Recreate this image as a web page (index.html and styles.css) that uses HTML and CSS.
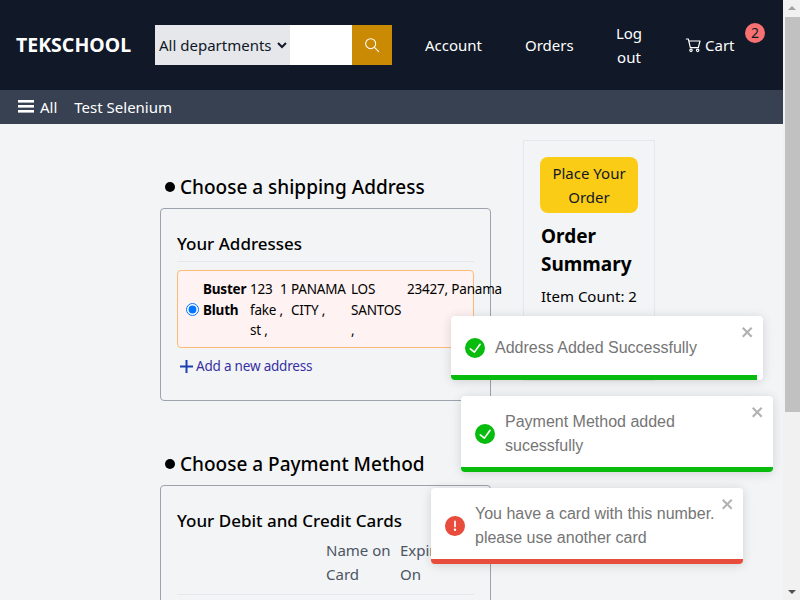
FILE: index.html
```html
<!DOCTYPE html>
<html lang="en">
<head>
  <meta charset="UTF-8" />
  <title>TEKSCHOOL - Checkout</title>
  <link rel="stylesheet" href="styles.css">
</head>
<body>
  <div class="page">
    <header class="top-bar">
      <div class="logo">TEKSCHOOL</div>
      <form class="search">
        <select class="search-select">
          <option>All departments</option>
        </select>
        <input class="search-input" type="text" />
        <button class="search-btn" type="button">
          <svg width="16" height="16" viewBox="0 0 24 24" fill="none" stroke="currentColor" stroke-width="1.6" stroke-linecap="round"><circle cx="10" cy="10" r="7.5"/><path d="M16 16l6 6"/></svg>
        </button>
      </form>
      <nav class="top-links">
        <a>Account</a>
        <a>Orders</a>
        <a class="center">Log out</a>
        <a class="cart">
          <svg width="16" height="16" viewBox="0 0 24 24" fill="none" stroke="currentColor" stroke-width="1.8" stroke-linecap="round" stroke-linejoin="round"><path d="M2 3h3l3 13h12l2.5-10H6"/><circle cx="9" cy="20" r="1.8"/><circle cx="19" cy="20" r="1.8"/></svg>
          Cart
          <span class="badge">2</span>
        </a>
      </nav>
    </header>
    <div class="sub-bar">
      <span class="all">
        <svg width="18" height="14" viewBox="0 0 18 14" fill="currentColor"><rect y="0" width="16" height="2.6"/><rect y="5" width="16" height="2.6"/><rect y="10" width="16" height="2.6"/></svg>
        All
      </span>
      <span>Test Selenium</span>
    </div>

    <main class="checkout">
      <div class="steps">
        <section class="step">
          <h2 class="step-title"><i class="dot"></i>Choose a shipping Address</h2>
          <div class="box">
            <h3 class="box-title">Your Addresses</h3>
            <div class="address">
              <input type="radio" checked />
              <b>Buster Bluth</b>
              <span>123 fake&nbsp;, st&nbsp;,</span>
              <span>1</span>
              <span>PANAMA CITY&nbsp;,</span>
              <span>LOS SANTOS ,</span>
              <span class="nowrap">23427, Panama</span>
            </div>
            <a class="add-link">
              <svg width="13" height="13" viewBox="0 0 13 13" fill="none" stroke="#1e40af" stroke-width="2"><path d="M6.5 0v13M0 6.5h13"/></svg>
              Add a new address
            </a>
          </div>
        </section>

        <section class="step">
          <h2 class="step-title"><i class="dot"></i>Choose a Payment Method</h2>
          <div class="box box-cards">
            <h3 class="box-title plain">Your Debit and Credit Cards</h3>
            <div class="card-head">
              <span>Name on Card</span>
              <span>Expires On</span>
            </div>
          </div>
        </section>
      </div>

      <aside class="summary">
        <button class="place-btn" type="button">Place Your Order</button>
        <h2 class="summary-title">Order Summary</h2>
        <p class="summary-line">Item Count: 2</p>
      </aside>
    </main>
  </div>

  <div class="scrollbar">
    <i class="arrow up"></i>
    <div class="thumb"></div>
    <i class="arrow down"></i>
  </div>

  <div class="toasts">
    <div class="toast">
      <svg class="toast-icon green" viewBox="0 0 24 24" fill="currentColor"><path d="M12 0a12 12 0 1012 12A12.014 12.014 0 0012 0zm6.927 8.2l-6.845 9.289a1.011 1.011 0 01-1.43.188l-4.888-3.908a1 1 0 111.25-1.562l4.076 3.261 6.227-8.451a1 1 0 111.61 1.183z"/></svg>
      <div class="toast-text">Address Added Successfully</div>
      <svg class="toast-close" width="14" height="16" viewBox="0 0 14 16" fill="currentColor"><path d="M7.71 8.23l3.75 3.75-1.48 1.48-3.75-3.75-3.75 3.75L1 11.98l3.75-3.75L1 4.48 2.48 3l3.75 3.75L9.98 3l1.48 1.48-3.75 3.75z"/></svg>
      <div class="toast-bar bar-green" style="width: 98%"></div>
    </div>
    <div class="toast shift-right">
      <svg class="toast-icon green" viewBox="0 0 24 24" fill="currentColor"><path d="M12 0a12 12 0 1012 12A12.014 12.014 0 0012 0zm6.927 8.2l-6.845 9.289a1.011 1.011 0 01-1.43.188l-4.888-3.908a1 1 0 111.25-1.562l4.076 3.261 6.227-8.451a1 1 0 111.61 1.183z"/></svg>
      <div class="toast-text">Payment Method added sucessfully</div>
      <svg class="toast-close" width="14" height="16" viewBox="0 0 14 16" fill="currentColor"><path d="M7.71 8.23l3.75 3.75-1.48 1.48-3.75-3.75-3.75 3.75L1 11.98l3.75-3.75L1 4.48 2.48 3l3.75 3.75L9.98 3l1.48 1.48-3.75 3.75z"/></svg>
      <div class="toast-bar bar-green" style="width: 100%"></div>
    </div>
    <div class="toast shift-left">
      <svg class="toast-icon red" viewBox="0 0 24 24" fill="currentColor"><path d="M11.983 0a12.206 12.206 0 00-8.51 3.653A11.8 11.8 0 000 12.207 11.779 11.779 0 0011.8 24h.214A12.111 12.111 0 0024 11.791 11.766 11.766 0 0011.983 0zM10.5 16.542a1.476 1.476 0 011.449-1.53h.027a1.527 1.527 0 011.523 1.47 1.475 1.475 0 01-1.449 1.53h-.027a1.529 1.529 0 01-1.523-1.47zM11 12.5v-6a1 1 0 012 0v6a1 1 0 11-2 0z"/></svg>
      <div class="toast-text">You have a card with this number. please use another card</div>
      <svg class="toast-close" width="14" height="16" viewBox="0 0 14 16" fill="currentColor"><path d="M7.71 8.23l3.75 3.75-1.48 1.48-3.75-3.75-3.75 3.75L1 11.98l3.75-3.75L1 4.48 2.48 3l3.75 3.75L9.98 3l1.48 1.48-3.75 3.75z"/></svg>
      <div class="toast-bar bar-red" style="width: 100%"></div>
    </div>
  </div>
</body>
</html>
```

FILE: styles.css
```css
* {
  box-sizing: border-box;
}
html, body {
  height: 100%;
}
body {
  margin: 0;
  height: 600px;
  overflow: hidden;
  display: flex;
  background: #f3f4f6;
  color: #000;
  font-family: "Noto Sans", "Open Sans", sans-serif;
  font-size: 15px;
  line-height: 24px;
}
.page {
  width: 783px;
  height: 600px;
  overflow: hidden;
  flex: none;
}

/* top bar */
.top-bar {
  height: 90px;
  background: #111827;
  color: #fff;
  display: flex;
  align-items: center;
  padding-left: 16px;
}
.logo {
  width: 139px;
  font-size: 19.5px;
  font-weight: 700;
}
.search {
  display: flex;
  height: 40px;
  width: 237px;
}
.search-select {
  width: 135px;
  height: 40px;
  border: none;
  border-radius: 0;
  background: #e5e7eb;
  color: #111827;
  font-family: inherit;
  font-size: 15px;
  padding: 0;
}
.search-input {
  width: 62px;
  border: none;
  background: #fff;
}
.search-btn {
  width: 40px;
  border: none;
  background: #ca8a04;
  color: #fff;
  display: flex;
  align-items: center;
  justify-content: center;
  padding: 0;
}
.top-links {
  margin-left: 33px;
  display: grid;
  grid-template-columns: 58px 48px 28px auto;
  column-gap: 42px;
  align-items: center;
}
.center {
  text-align: center;
}
.cart {
  position: relative;
  display: flex;
  align-items: center;
  gap: 4px;
  white-space: nowrap;
}
.badge {
  position: absolute;
  left: 60px;
  top: -10px;
  width: 20px;
  height: 20px;
  border-radius: 50%;
  background: #f87171;
  color: #111827;
  font-size: 14px;
  line-height: 20px;
  text-align: center;
}
.sub-bar {
  height: 34px;
  background: #374151;
  color: #fff;
  display: flex;
  align-items: center;
  gap: 17px;
  padding: 0 0 1px 18px;
}
.all {
  display: flex;
  align-items: center;
  gap: 4px;
}

/* checkout */
.checkout {
  display: flex;
  align-items: flex-start;
  gap: 32px;
  padding: 16px 0 0 160px;
}
.steps {
  width: 331px;
  flex: none;
}
.step-title {
  margin: 33px 0 7px;
  display: flex;
  align-items: center;
  font-size: 19px;
  font-weight: 500;
  line-height: 28px;
}
.step + .step .step-title {
  margin-top: 49px;
}
.dot {
  width: 10px;
  height: 10px;
  border-radius: 50%;
  background: #000;
  margin: 0 5px;
}
.box {
  border: 1px solid #9ca3af;
  border-radius: 4px;
  padding: 24px 16px 0;
  height: 193px;
}
.box-cards {
  position: relative;
  height: 300px;
}
.box-title {
  margin: 0;
  font-size: 17px;
  font-weight: 500;
  line-height: 22px;
  padding-bottom: 6px;
  border-bottom: 1px solid #e5e7eb;
}
.box-title.plain {
  border-bottom: none;
  padding-bottom: 6px;
}
.address {
  margin-top: 8px;
  width: 297px;
  height: 78px;
  background: #fef2f2;
  border: 1px solid #fdba74;
  border-radius: 4px;
  display: grid;
  grid-template-columns: 17px 47px 30px 11px 60px 56px auto;
  align-items: start;
  padding: 8px 0 0 8px;
  font-size: 13.5px;
  letter-spacing: -0.2px;
  line-height: 20.5px;
}
.address input {
  margin: 24px 0 0;
  width: 13px;
  height: 13px;
}
.nowrap {
  white-space: nowrap;
}
.add-link {
  display: flex;
  align-items: center;
  gap: 3px;
  margin: 7px 0 0 3px;
  color: #3730a3;
  font-size: 13.5px;
  letter-spacing: -0.2px;
  line-height: 22px;
}
.card-head {
  display: grid;
  grid-template-columns: 74px 74px;
  margin-left: 149px;
  color: #4b5563;
}
.card-head::after {
  content: "";
  position: absolute;
  left: 16px;
  right: 16px;
  top: 108px;
  border-top: 1px solid #e5e7eb;
}

/* summary */
.summary {
  width: 132px;
  height: 241px;
  flex: none;
  overflow: hidden;
  border: 1px solid #e5e7eb;
  padding: 16px;
}
.place-btn {
  display: block;
  width: 98px;
  height: 56px;
  border: none;
  border-radius: 8px;
  background: #facc15;
  color: #111827;
  font-family: inherit;
  font-size: 15px;
  line-height: 24px;
  padding: 4px;
}
.summary-title {
  margin: 9px 0 0 1px;
  font-size: 19px;
  font-weight: 700;
  line-height: 28px;
}
.summary-line {
  margin: 6px 0 0 1px;
}

/* scrollbar on the right edge of the window */
.scrollbar {
  width: 17px;
  height: 600px;
  flex: none;
  background: #f1f1f1;
  display: flex;
  flex-direction: column;
  align-items: flex-end;
}
.thumb {
  width: 15px;
  height: 395px;
  background: #c1c1c1;
}
.arrow {
  width: 15px;
  height: 17px;
  flex: none;
  position: relative;
}
.arrow.down {
  margin-top: auto;
}
.arrow::after {
  content: "";
  position: absolute;
  left: 3px;
  border-left: 4px solid transparent;
  border-right: 4px solid transparent;
}
.arrow.up::after {
  top: 6px;
  border-bottom: 4px solid #a3a3a3;
}
.arrow.down::after {
  top: 7px;
  border-top: 4px solid #505050;
}

/* toasts */
.toasts {
  position: absolute;
  top: 316px;
  left: 451px;
  width: 312px;
  display: flex;
  flex-direction: column;
  gap: 16px;
}
.toast {
  position: relative;
  min-height: 64px;
  display: flex;
  align-items: center;
  padding: 14px 23px 14px 14px;
  background: #fff;
  border-radius: 4px;
  overflow: hidden;
  box-shadow: 0 1px 10px 0 rgba(0, 0, 0, 0.1), 0 2px 15px 0 rgba(0, 0, 0, 0.05);
  color: #757575;
  font-family: "Liberation Sans", Arial, sans-serif;
  font-size: 16px;
  line-height: 24px;
}
.shift-right {
  transform: translateX(10px);
}
.shift-left {
  transform: translateX(-20px);
}
.toast-icon {
  width: 20px;
  height: 20px;
  flex: none;
  margin-right: 10px;
}
.green {
  color: #07bc0c;
}
.red {
  color: #e74c3c;
}
.toast-close {
  position: absolute;
  top: 8px;
  right: 8px;
  color: #000;
  opacity: 0.3;
}
.toast-bar {
  position: absolute;
  left: 0;
  bottom: 0;
  height: 5px;
}
.bar-green {
  background: #07bc0c;
}
.bar-red {
  background: #e74c3c;
}
```
